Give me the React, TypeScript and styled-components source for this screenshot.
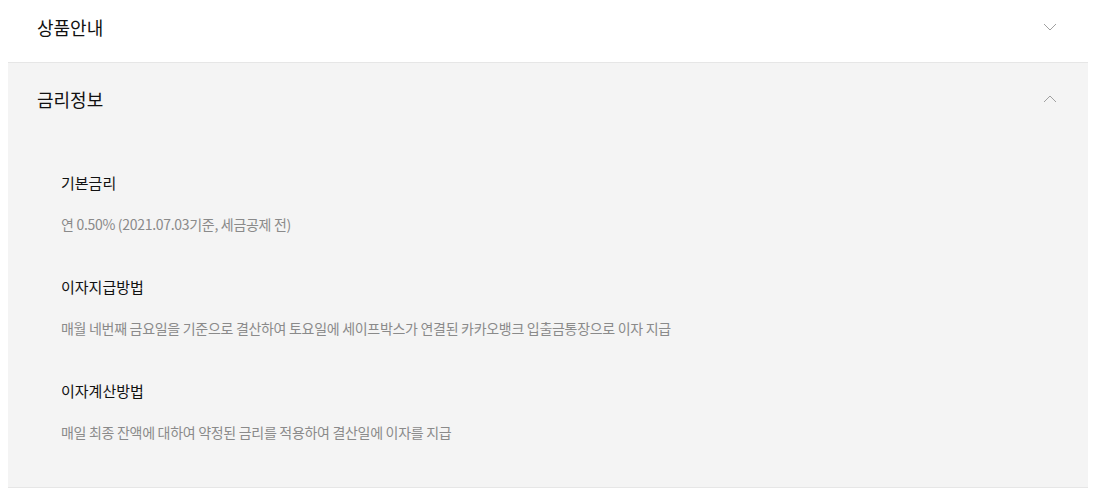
import React, { useState } from 'react';
import styled, { createGlobalStyle } from 'styled-components';

const GlobalStyle = createGlobalStyle`
  body {
    margin: 0;
    background: #fff;
    font-family: "Noto Sans CJK KR", "Noto Sans", sans-serif;
  }
`;

const List = styled.div`
  width: 1080px;
  margin: -9px 0 0 8px;
`;

const Item = styled.section`
  border-bottom: 1px solid #e6e6e6;
`;

const Header = styled.button<{ $open: boolean }>`
  display: flex;
  align-items: center;
  justify-content: space-between;
  width: 100%;
  height: 71px;
  padding: 0 31px 0 29px;
  border: 0;
  background: ${(p) => (p.$open ? '#f4f4f4' : '#fff')};
  font-family: inherit;
  font-size: 18px;
  color: #111;
  cursor: pointer;
  text-align: left;
`;

const Chevron = styled.svg<{ $open: boolean }>`
  width: 14px;
  height: 8px;
  transform: ${(p) => (p.$open ? 'rotate(180deg)' : 'none')};
`;

const Panel = styled.div`
  background: #f4f4f4;
  padding: 38px 53px 45px;
  display: flex;
  flex-direction: column;
  gap: 42px;
`;

const Block = styled.div`
  display: flex;
  flex-direction: column;
  gap: 20px;
`;

const Title = styled.h3`
  margin: 0;
  font-size: 15px;
  line-height: 22px;
  font-weight: 400;
  color: #111;
`;

const Desc = styled.p`
  margin: 0;
  font-size: 14px;
  line-height: 20px;
  letter-spacing: -0.3px;
  color: #8a8a8a;
`;

const sections = [
  { title: '기본금리', desc: '연 0.50% (2021.07.03기준, 세금공제 전)' },
  {
    title: '이자지급방법',
    desc: '매월 네번째 금요일을 기준으로 결산하여 토요일에 세이프박스가 연결된 카카오뱅크 입출금통장으로 이자 지급',
  },
  { title: '이자계산방법', desc: '매일 최종 잔액에 대하여 약정된 금리를 적용하여 결산일에 이자를 지급' },
];

const Arrow = ({ open }: { open: boolean }) => (
  <Chevron $open={open} viewBox="0 0 14 8">
    <path d="M1 1l6 6 6-6" fill="none" stroke="#a0a0a0" strokeWidth="1" />
  </Chevron>
);

export default function App() {
  const [open, setOpen] = useState('rate');

  const toggle = (key: string) => setOpen(open === key ? '' : key);

  return (
    <>
      <GlobalStyle />
      <List>
        <Item>
          <Header $open={open === 'info'} onClick={() => toggle('info')}>
            상품안내
            <Arrow open={open === 'info'} />
          </Header>
        </Item>
        <Item>
          <Header $open={open === 'rate'} onClick={() => toggle('rate')}>
            금리정보
            <Arrow open={open === 'rate'} />
          </Header>
          {open === 'rate' && (
            <Panel>
              {sections.map((s) => (
                <Block key={s.title}>
                  <Title>{s.title}</Title>
                  <Desc>{s.desc}</Desc>
                </Block>
              ))}
            </Panel>
          )}
        </Item>
      </List>
    </>
  );
}
